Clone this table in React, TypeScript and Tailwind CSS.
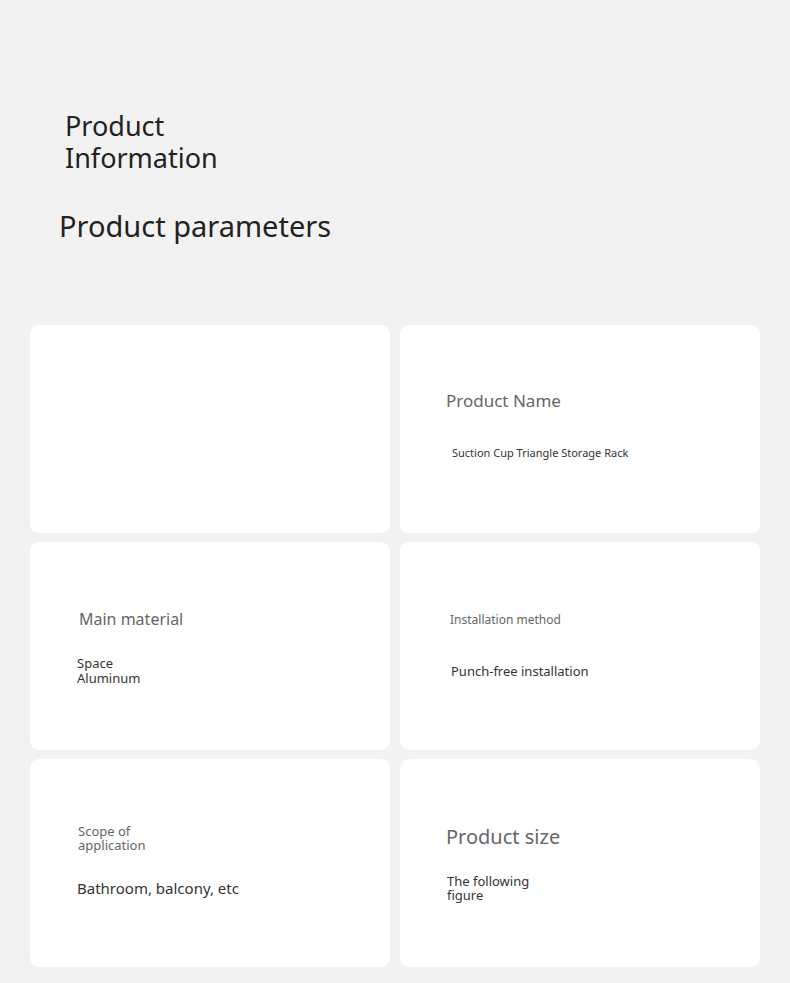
import React from "react";

const font = { fontFamily: '"Noto Sans", "Open Sans", sans-serif' };

export default function App() {
  return (
    <div className="w-[790px] h-[983px] bg-[#f2f2f2] overflow-hidden" style={font}>
      <div className="pt-[110px] pl-[65px] text-[27px] leading-[32px] text-[#222]">
        <div>Product</div>
        <div>Information</div>
      </div>
      <div className="mt-[34px] pl-[59px] text-[29px] leading-[36px] text-[#222]">
        Product parameters
      </div>
      <div className="mt-[81px] px-[30px] grid grid-cols-2 gap-x-[10px] gap-y-[9px]">
        <div className="h-[208px] bg-white rounded-[9px]" />
        <div className="h-[208px] bg-white rounded-[9px] pt-[66px]">
          <div className="pl-[46px] text-[17px] leading-[20px] text-[#666]">Product Name</div>
          <div className="mt-[35px] pl-[52px] text-[11px] leading-[14px] text-[#333]">
            Suction Cup Triangle Storage Rack
          </div>
        </div>
        <div className="h-[208px] bg-white rounded-[9px] pt-[67px]">
          <div className="pl-[49px] text-[16px] leading-[20px] text-[#666]">Main material</div>
          <div className="mt-[27px] pl-[47px] text-[13px] leading-[15px] text-[#333]">
            <div>Space</div>
            <div>Aluminum</div>
          </div>
        </div>
        <div className="h-[208px] bg-white rounded-[9px] pt-[70px]">
          <div className="pl-[50px] text-[12px] leading-[16px] text-[#666]">Installation method</div>
          <div className="mt-[35px] pl-[51px] text-[13px] leading-[16px] text-[#333]">
            Punch-free installation
          </div>
        </div>
        <div className="h-[208px] bg-white rounded-[9px] pt-[65px]">
          <div className="pl-[48px] text-[13px] leading-[14px] text-[#666]">
            <div>Scope of</div>
            <div>application</div>
          </div>
          <div className="mt-[27px] pl-[47px] text-[15px] leading-[18px] text-[#333]">
            Bathroom, balcony, etc
          </div>
        </div>
        <div className="h-[208px] bg-white rounded-[9px] pt-[66px]">
          <div className="pl-[46px] text-[20px] leading-[24px] text-[#666]">Product size</div>
          <div className="mt-[25px] pl-[47px] text-[13px] leading-[14px] text-[#333]">
            <div>The following</div>
            <div>figure</div>
          </div>
        </div>
      </div>
    </div>
  );
}
